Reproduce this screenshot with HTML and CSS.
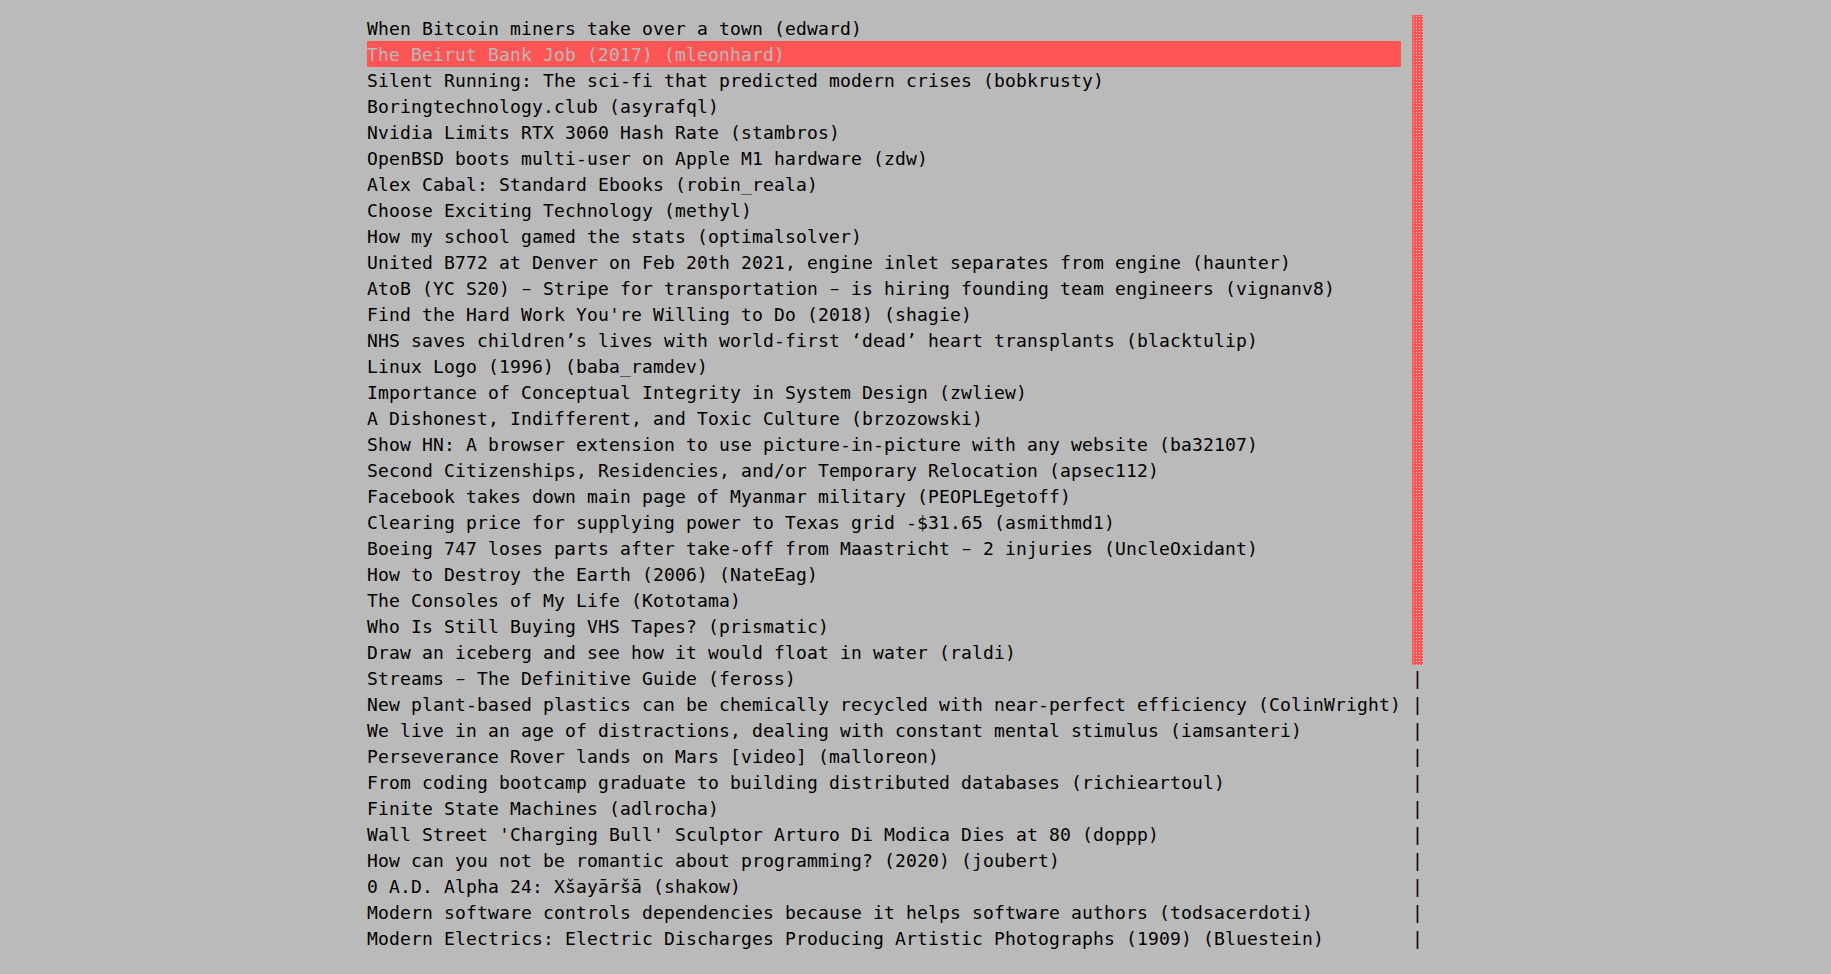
FILE: index.html
```html
<!DOCTYPE html>
<html>
<head>
<meta charset="utf-8">
<link rel="stylesheet" href="styles.css">
</head>
<body>
<div class="term">
  <div class="list">
    <div class="row">When Bitcoin miners take over a town (edward)</div>
    <div class="row sel">The Beirut Bank Job (2017) (mleonhard)</div>
    <div class="row">Silent Running: The sci-fi that predicted modern crises (bobkrusty)</div>
    <div class="row">Boringtechnology.club (asyrafql)</div>
    <div class="row">Nvidia Limits RTX 3060 Hash Rate (stambros)</div>
    <div class="row">OpenBSD boots multi-user on Apple M1 hardware (zdw)</div>
    <div class="row">Alex Cabal: Standard Ebooks (robin_reala)</div>
    <div class="row">Choose Exciting Technology (methyl)</div>
    <div class="row">How my school gamed the stats (optimalsolver)</div>
    <div class="row">United B772 at Denver on Feb 20th 2021, engine inlet separates from engine (haunter)</div>
    <div class="row">AtoB (YC S20) <span class="dash">–</span> Stripe for transportation <span class="dash">–</span> is hiring founding team engineers (vignanv8)</div>
    <div class="row">Find the Hard Work You're Willing to Do (2018) (shagie)</div>
    <div class="row">NHS saves children’s lives with world-first ‘dead’ heart transplants (blacktulip)</div>
    <div class="row">Linux Logo (1996) (baba_ramdev)</div>
    <div class="row">Importance of Conceptual Integrity in System Design (zwliew)</div>
    <div class="row">A Dishonest, Indifferent, and Toxic Culture (brzozowski)</div>
    <div class="row">Show HN: A browser extension to use picture-in-picture with any website (ba32107)</div>
    <div class="row">Second Citizenships, Residencies, and/or Temporary Relocation (apsec112)</div>
    <div class="row">Facebook takes down main page of Myanmar military (PEOPLEgetoff)</div>
    <div class="row">Clearing price for supplying power to Texas grid -$31.65 (asmithmd1)</div>
    <div class="row">Boeing 747 loses parts after take-off from Maastricht <span class="dash">–</span> 2 injuries (UncleOxidant)</div>
    <div class="row">How to Destroy the Earth (2006) (NateEag)</div>
    <div class="row">The Consoles of My Life (Kototama)</div>
    <div class="row">Who Is Still Buying VHS Tapes? (prismatic)</div>
    <div class="row">Draw an iceberg and see how it would float in water (raldi)</div>
    <div class="row">Streams <span class="dash">–</span> The Definitive Guide (feross)</div>
    <div class="row">New plant-based plastics can be chemically recycled with near-perfect efficiency (ColinWright)</div>
    <div class="row">We live in an age of distractions, dealing with constant mental stimulus (iamsanteri)</div>
    <div class="row">Perseverance Rover lands on Mars [video] (malloreon)</div>
    <div class="row">From coding bootcamp graduate to building distributed databases (richieartoul)</div>
    <div class="row">Finite State Machines (adlrocha)</div>
    <div class="row">Wall Street 'Charging Bull' Sculptor Arturo Di Modica Dies at 80 (doppp)</div>
    <div class="row">How can you not be romantic about programming? (2020) (joubert)</div>
    <div class="row">0 A.D. Alpha 24: Xšayāršā (shakow)</div>
    <div class="row">Modern software controls dependencies because it helps software authors (todsacerdoti)</div>
    <div class="row">Modern Electrics: Electric Discharges Producing Artistic Photographs (1909) (Bluestein)</div>
  </div>
  <div class="scroll">
    <div class="thumb"></div>
    <div class="track">|</div>
    <div class="track">|</div>
    <div class="track">|</div>
    <div class="track">|</div>
    <div class="track">|</div>
    <div class="track">|</div>
    <div class="track">|</div>
    <div class="track">|</div>
    <div class="track">|</div>
    <div class="track">|</div>
    <div class="track">|</div>
  </div>
</div>
</body>
</html>
```

FILE: styles.css
```css
html, body {
  margin: 0;
  padding: 0;
  background: #bababa;
}
body {
  width: 1831px;
  height: 974px;
  overflow: hidden;
}
.term {
  display: flex;
  align-items: flex-start;
  gap: 11px;
  padding: 15px 0 0 367px;
  font-family: "DejaVu Sans Mono", "Liberation Mono", monospace;
  font-size: 18px;
  letter-spacing: 0.163px;
  line-height: 26px;
  color: #000;
}
.list {
  width: 1034px;
  display: flex;
  flex-direction: column;
}
.row {
  height: 26px;
  box-sizing: border-box;
  padding-top: 1px;
  line-height: 25px;
  white-space: pre;
}
.row.sel {
  background: #ff5555;
  color: #bababa;
}
.dash {
  display: inline-block;
  transform: scaleX(0.7);
}
.scroll {
  width: 11px;
  display: flex;
  flex-direction: column;
}
.thumb {
  height: 650px;
  background-color: #ff5555;
  background-image: conic-gradient(from 270deg at 1px 1px, #d2d2d2 90deg, transparent 0);
  background-size: 3px 3px;
  background-position: 1px 1px;
}
.track {
  height: 26px;
  box-sizing: border-box;
  padding-top: 1px;
  line-height: 25px;
  text-align: center;
  letter-spacing: 0;
}
```
